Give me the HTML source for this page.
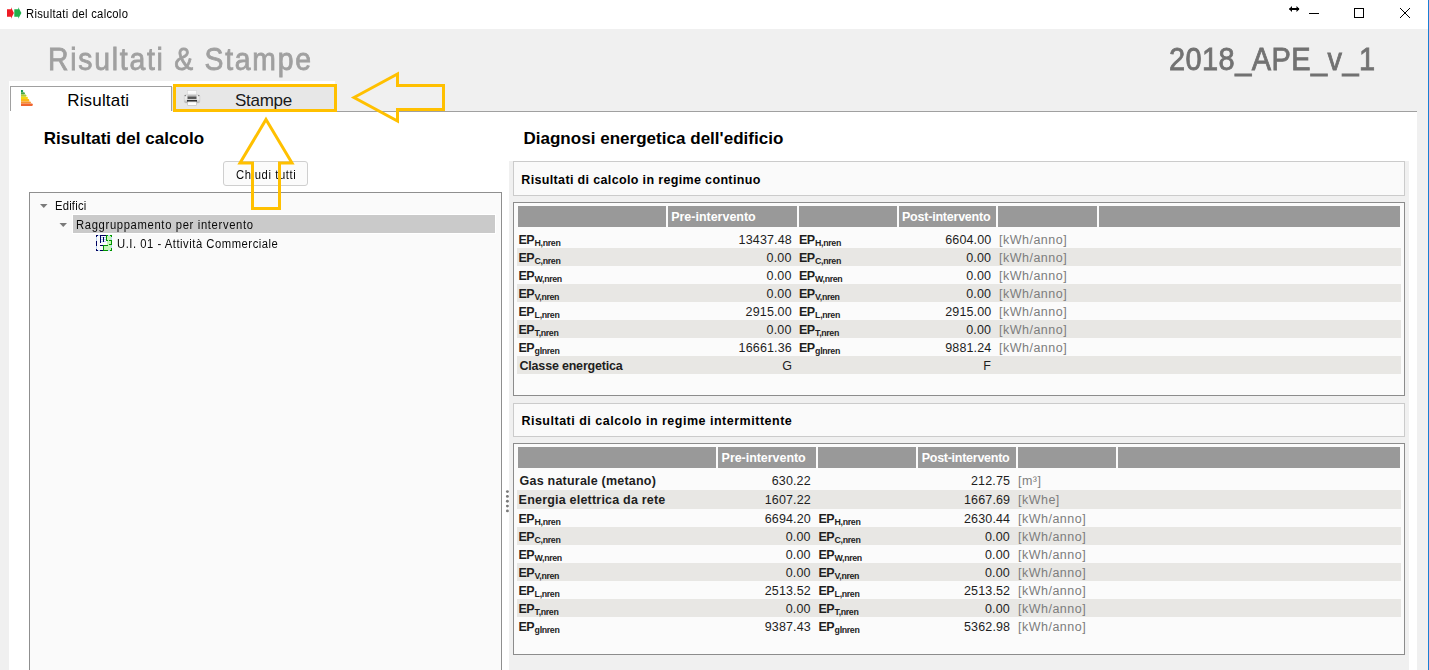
<!DOCTYPE html>
<html><head><meta charset="utf-8">
<style>
html,body{margin:0;padding:0;}
body{width:1429px;height:670px;overflow:hidden;position:relative;background:#f0f0f0;font-family:"Liberation Sans", sans-serif;}
.a{position:absolute;}
</style></head><body>
<!-- title bar -->
<div class="a" style="left:0;top:0;width:1428px;height:29px;background:#fff;"></div>
<div class="a" style="left:1428px;top:0;width:1px;height:670px;background:#1a7fd4;"></div>
<!-- title icon -->
<svg class="a" style="left:3px;top:3px" width="22" height="22" viewBox="0 0 22 22">
  <defs><filter id="bl" x="-30%" y="-30%" width="160%" height="160%"><feGaussianBlur stdDeviation="0.45"/></filter></defs>
  <g filter="url(#bl)">
  <path d="M4 6.3 L8 6.3 L8 4.2 L10.9 10 L8 15.8 L8 13.7 L4 13.7 Z" fill="#ee1c25"/>
  <path d="M11.3 6.3 L15.3 6.3 L15.3 4.2 L18.4 10 L15.3 15.8 L15.3 13.7 L11.3 13.7 Z" fill="#22b14c"/>
  </g>
</svg>
<!-- window controls -->
<svg class="a" style="left:1286px;top:3px" width="130" height="20" viewBox="0 0 130 20">
  <path d="M3.5 6 L13 6" stroke="#000" stroke-width="2"/>
  <path d="M3 6 L6 3 L6 9 Z M13.5 6 L10.5 3 L10.5 9 Z" fill="#000"/>
  <path d="M23 10.5 L33 10.5" stroke="#000" stroke-width="1"/>
  <rect x="68.5" y="5.5" width="9" height="9" fill="none" stroke="#000" stroke-width="1"/>
  <path d="M114 5 L124 15 M124 5 L114 15" stroke="#000" stroke-width="1"/>
</svg>
<!-- tab widget white area -->
<div class="a" style="left:9px;top:81px;width:326px;height:30px;background:#fff;"></div>
<div class="a" style="left:9px;top:111px;width:1408px;height:559px;background:#fff;"></div>
<!-- selected tab -->
<div class="a" style="left:10px;top:86px;width:160px;height:24px;border:1px solid #a0a0a0;border-bottom:none;background:#fff;"></div>
<!-- unselected tab -->
<div class="a" style="left:172px;top:87px;width:163px;height:24px;background:#e7e7e7;"></div>
<!-- tab bar line -->
<div class="a" style="left:173px;top:111px;width:1244px;height:1px;background:#a0a0a0;"></div>
<!-- tab icons -->
<svg class="a" style="left:21px;top:90px" width="13" height="16" viewBox="0 0 13 16">
  <path d="M0 0 H1.6 L2.4 1.1 L1.6 2.3 H0 Z" fill="#0e9a4f"/>
  <path d="M0 2.3 H3.3 L4.1 3.4 L3.3 4.5 H0 Z" fill="#47a844"/>
  <path d="M0 4.5 H4.8 L5.6 5.6 L4.8 6.8 H0 Z" fill="#b5cc32"/>
  <path d="M0 6.8 H6.3 L7.1 7.9 L6.3 9 H0 Z" fill="#f4d60f"/>
  <path d="M0 9 H7.7 L8.5 10.2 L7.7 11.4 H0 Z" fill="#fbb819"/>
  <path d="M0 11.4 H9.3 L10.1 12.4 L9.3 13.5 H0 Z" fill="#f7942e"/>
  <path d="M0 13.5 H11.2 L12 14.7 L11.2 16 H0 Z" fill="#ef6530"/>
</svg>
<svg class="a" style="left:182px;top:88px" width="20" height="20" viewBox="0 0 20 20">
  <defs><linearGradient id="pg" x1="0" y1="0" x2="0" y2="1"><stop offset="0" stop-color="#ffffff"/><stop offset="0.5" stop-color="#f6f6f6"/><stop offset="1" stop-color="#a8a8a8"/></linearGradient>
  <linearGradient id="bd" x1="0" y1="0" x2="0" y2="1"><stop offset="0" stop-color="#7a7a7a"/><stop offset="1" stop-color="#303030"/></linearGradient>
  <linearGradient id="sd" x1="0" y1="0" x2="0" y2="1"><stop offset="0" stop-color="#f4f4f4"/><stop offset="0.6" stop-color="#e8e8e8"/><stop offset="1" stop-color="#a9a9a9"/></linearGradient></defs>
  <path d="M2.3 8.5 Q2.3 6.6 4 6.6 H16 Q17.8 6.6 17.8 8.5 V13.2 Q17.8 15 16 15 H4 Q2.3 15 2.3 13.2 Z" fill="url(#sd)" stroke="#c4c4c4" stroke-width="0.5"/>
  <rect x="2.6" y="7.1" width="1.5" height="1.1" fill="#7e7e7e"/><rect x="15.9" y="7.1" width="1.5" height="1.1" fill="#7e7e7e"/>
  <rect x="5.5" y="2.7" width="9" height="5.6" fill="url(#pg)" stroke="#d2d2d2" stroke-width="0.5"/>
  <rect x="5.5" y="8.3" width="9" height="2.5" fill="url(#bd)"/>
  <rect x="5" y="11.9" width="10" height="1.9" fill="#323232"/>
  <rect x="5.7" y="13.9" width="8.6" height="3.4" fill="#ffffff" stroke="#bdbdbd" stroke-width="0.6"/>
</svg>
<!-- Chiudi tutti button -->
<div class="a" style="left:223px;top:161px;width:83px;height:23px;border:1px solid #cfcfcf;border-radius:3px;background:#fbfbfb;"></div>
<!-- tree -->
<div class="a" style="left:29px;top:192px;width:471px;height:490px;border:1px solid #8f8f8f;background:#fafafa;"></div>
<div class="a" style="left:72px;top:214px;width:422px;height:18px;border:1px solid #fff;background:#cacaca;"></div>
<svg class="a" style="left:38px;top:201px" width="40" height="30" viewBox="0 0 40 30">
  <path d="M2 3 L9.5 3 L5.75 7 Z" fill="#7a7a7a"/>
  <path d="M21.5 22 L29 22 L25.25 26 Z" fill="#7a7a7a"/>
</svg>
<svg class="a" style="left:96px;top:235px" width="16" height="16" viewBox="0 0 16 16" shape-rendering="crispEdges">
  <g fill="#c6f7b6"><rect x="11" y="1" width="4" height="14"/><rect x="8" y="11" width="7" height="4"/></g>
  <g fill="#b8d8f8"><rect x="0" y="2" width="1" height="4"/><rect x="0" y="11" width="1" height="3"/><rect x="2" y="0" width="2" height="1"/><rect x="2" y="15" width="2" height="1"/><rect x="5" y="2" width="5" height="1"/><rect x="5" y="4" width="5" height="1"/><rect x="5" y="6" width="5" height="1"/><rect x="15" y="2" width="1" height="3"/><rect x="15" y="10" width="1" height="3"/><rect x="12" y="0" width="2" height="1"/><rect x="12" y="15" width="2" height="1"/></g>
  <g fill="#00005e">
    <rect x="0" y="0" width="2" height="1"/><rect x="0" y="0" width="1" height="2"/>
    <rect x="0" y="6" width="1" height="5"/>
    <rect x="0" y="14" width="1" height="2"/><rect x="0" y="15" width="2" height="1"/>
    <rect x="4" y="0" width="6" height="1"/><rect x="4" y="0" width="1" height="8"/>
    <rect x="7" y="2" width="1" height="5"/>
    <rect x="4" y="10" width="3" height="1"/>
    <rect x="4" y="15" width="3" height="1"/>
  </g>
  <g fill="#009400">
    <rect x="10" y="0" width="2" height="1"/><rect x="10" y="0" width="1" height="6"/><rect x="10" y="5" width="2" height="1"/>
    <rect x="14" y="0" width="2" height="1"/><rect x="15" y="0" width="1" height="2"/>
    <rect x="13" y="5" width="3" height="1"/><rect x="15" y="5" width="1" height="5"/><rect x="13" y="9" width="3" height="1"/>
    <rect x="7" y="10" width="5" height="1"/><rect x="7" y="10" width="1" height="6"/><rect x="7" y="15" width="5" height="1"/>
    <rect x="14" y="15" width="2" height="1"/><rect x="15" y="13" width="1" height="3"/>
  </g>
</svg>
<!-- right gray panel -->
<div class="a" style="left:509px;top:161px;width:900px;height:520px;background:#f0f0f0;"></div>
<!-- header box 1 -->
<div class="a" style="left:513px;top:161px;width:890px;height:33px;border:1px solid #cbcbcb;background:#fafafa;"></div>
<!-- table box 1 -->
<div class="a" style="left:513px;top:202px;width:890px;height:192px;border:1px solid #8c8c8c;background:#fbfbfb;"></div>
<!-- header row 1 -->
<div class="a" style="left:518px;top:206px;width:148px;height:21px;background:#999;"></div>
<div class="a" style="left:668px;top:206px;width:129px;height:21px;background:#999;"></div>
<div class="a" style="left:799px;top:206px;width:98px;height:21px;background:#999;"></div>
<div class="a" style="left:899px;top:206px;width:97px;height:21px;background:#999;"></div>
<div class="a" style="left:998px;top:206px;width:99px;height:21px;background:#999;"></div>
<div class="a" style="left:1099px;top:206px;width:301px;height:21px;background:#999;"></div>
<!-- alt rows 1 -->
<div class="a" style="left:517px;top:248px;width:884px;height:18px;background:#e8e7e4;"></div>
<div class="a" style="left:517px;top:284px;width:884px;height:18px;background:#e8e7e4;"></div>
<div class="a" style="left:517px;top:320px;width:884px;height:18px;background:#e8e7e4;"></div>
<div class="a" style="left:517px;top:356px;width:884px;height:18px;background:#e8e7e4;"></div>
<!-- header box 2 -->
<div class="a" style="left:513px;top:403px;width:890px;height:32px;border:1px solid #cbcbcb;background:#fafafa;"></div>
<!-- table box 2 -->
<div class="a" style="left:513px;top:443px;width:890px;height:210px;border:1px solid #8c8c8c;background:#fbfbfb;"></div>
<div class="a" style="left:518px;top:447px;width:198px;height:21px;background:#999;"></div>
<div class="a" style="left:718px;top:447px;width:98px;height:21px;background:#999;"></div>
<div class="a" style="left:818px;top:447px;width:98px;height:21px;background:#999;"></div>
<div class="a" style="left:918px;top:447px;width:98px;height:21px;background:#999;"></div>
<div class="a" style="left:1018px;top:447px;width:98px;height:21px;background:#999;"></div>
<div class="a" style="left:1118px;top:447px;width:282px;height:21px;background:#999;"></div>
<div class="a" style="left:517px;top:490px;width:884px;height:19px;background:#e8e7e4;"></div>
<div class="a" style="left:517px;top:527px;width:884px;height:18px;background:#e8e7e4;"></div>
<div class="a" style="left:517px;top:563px;width:884px;height:18px;background:#e8e7e4;"></div>
<div class="a" style="left:517px;top:599px;width:884px;height:18px;background:#e8e7e4;"></div>
<!-- splitter dots -->
<svg class="a" style="left:504px;top:488px" width="7" height="26" viewBox="0 0 7 26">
  <g fill="#7a7a7a"><circle cx="3.4" cy="3.6" r="1.45"/><circle cx="3.4" cy="8.4" r="1.45"/><circle cx="3.4" cy="13.3" r="1.45"/><circle cx="3.4" cy="18.1" r="1.45"/><circle cx="3.4" cy="22.9" r="1.45"/></g>
</svg>
<div style="position:absolute;left:26.40px;top:8.00px;font-size:12.50px;line-height:12.50px;font-weight:normal;color:#000;letter-spacing:0.311px;white-space:nowrap;transform:scaleX(0.9000);transform-origin:0 0;">Risultati del calcolo</div>
<div style="position:absolute;left:48.20px;top:44.30px;font-size:31.50px;line-height:31.50px;font-weight:normal;color:#a0a0a0;letter-spacing:1.948px;white-space:nowrap;transform:scaleX(0.9000);transform-origin:0 0;-webkit-text-stroke:0.8px #a0a0a0;">Risultati &amp; Stampe</div>
<div style="position:absolute;left:1169.20px;top:44.20px;font-size:31.50px;line-height:31.50px;font-weight:normal;color:#727272;letter-spacing:0.460px;white-space:nowrap;transform:scaleX(0.9200);transform-origin:0 0;-webkit-text-stroke:0.8px #727272;">2018_APE_v_1</div>
<div style="position:absolute;left:67.20px;top:92.00px;font-size:17.00px;line-height:17.00px;font-weight:normal;color:#000;letter-spacing:0.175px;white-space:nowrap;">Risultati</div>
<div style="position:absolute;left:235.00px;top:92.00px;font-size:17.00px;line-height:17.00px;font-weight:normal;color:#1a1a1a;letter-spacing:-0.280px;white-space:nowrap;">Stampe</div>
<div style="position:absolute;left:43.70px;top:129.80px;font-size:17.00px;line-height:17.00px;font-weight:bold;color:#000;letter-spacing:0.040px;white-space:nowrap;">Risultati del calcolo</div>
<div style="position:absolute;left:235.50px;top:168.60px;font-size:12.50px;line-height:12.50px;font-weight:normal;color:#0a0a0a;letter-spacing:0.667px;white-space:nowrap;transform:scaleX(0.9000);transform-origin:0 0;">Chiudi tutti</div>
<div style="position:absolute;left:55.20px;top:199.90px;font-size:12.50px;line-height:12.50px;font-weight:normal;color:#0a0a0a;letter-spacing:0.222px;white-space:nowrap;transform:scaleX(0.9000);transform-origin:0 0;">Edifici</div>
<div style="position:absolute;left:75.50px;top:218.70px;font-size:12.50px;line-height:12.50px;font-weight:normal;color:#0a0a0a;letter-spacing:0.722px;white-space:nowrap;transform:scaleX(0.9000);transform-origin:0 0;">Raggruppamento per intervento</div>
<div style="position:absolute;left:117.30px;top:237.90px;font-size:12.50px;line-height:12.50px;font-weight:normal;color:#0a0a0a;letter-spacing:0.582px;white-space:nowrap;transform:scaleX(0.9000);transform-origin:0 0;">U.I. 01 - Attivit&agrave; Commerciale</div>
<div style="position:absolute;left:523.40px;top:129.50px;font-size:17.00px;line-height:17.00px;font-weight:bold;color:#000;letter-spacing:0.028px;white-space:nowrap;">Diagnosi energetica dell'edificio</div>
<div style="position:absolute;left:521.30px;top:173.70px;font-size:12.50px;line-height:12.50px;font-weight:bold;color:#000;letter-spacing:0.350px;white-space:nowrap;">Risultati di calcolo in regime continuo</div>
<div style="position:absolute;left:521.40px;top:415.00px;font-size:12.50px;line-height:12.50px;font-weight:bold;color:#000;letter-spacing:0.505px;white-space:nowrap;">Risultati di calcolo in regime intermittente</div>
<div style="position:absolute;left:671.20px;top:210.80px;font-size:12.50px;line-height:12.50px;font-weight:bold;color:#fff;letter-spacing:-0.015px;white-space:nowrap;">Pre-intervento</div>
<div style="position:absolute;left:902.00px;top:210.80px;font-size:12.50px;line-height:12.50px;font-weight:bold;color:#fff;letter-spacing:-0.221px;white-space:nowrap;">Post-intervento</div>
<div style="position:absolute;left:518.50px;top:233.80px;font-size:12.50px;line-height:12.50px;font-weight:bold;color:#1e1e1e;letter-spacing:-0.600px;white-space:nowrap;">EP</div>
<div style="position:absolute;left:534.60px;top:238.50px;font-size:8.80px;line-height:8.80px;font-weight:bold;color:#1e1e1e;letter-spacing:-0.340px;white-space:nowrap;">H,nren</div>
<div style="position:absolute;left:738.60px;top:233.80px;font-size:12.50px;line-height:12.50px;font-weight:normal;color:#1e1e1e;letter-spacing:0.143px;white-space:nowrap;">13437.48</div>
<div style="position:absolute;left:799.00px;top:233.80px;font-size:12.50px;line-height:12.50px;font-weight:bold;color:#1e1e1e;letter-spacing:-0.600px;white-space:nowrap;">EP</div>
<div style="position:absolute;left:815.10px;top:238.50px;font-size:8.80px;line-height:8.80px;font-weight:bold;color:#1e1e1e;letter-spacing:-0.340px;white-space:nowrap;">H,nren</div>
<div style="position:absolute;left:945.20px;top:233.80px;font-size:12.50px;line-height:12.50px;font-weight:normal;color:#1e1e1e;letter-spacing:0.143px;white-space:nowrap;">6604.00</div>
<div style="position:absolute;left:999.00px;top:233.80px;font-size:12.50px;line-height:12.50px;font-weight:normal;color:#7d7d7d;letter-spacing:0.489px;white-space:nowrap;">[kWh/anno]</div>
<div style="position:absolute;left:518.50px;top:251.80px;font-size:12.50px;line-height:12.50px;font-weight:bold;color:#1e1e1e;letter-spacing:-0.600px;white-space:nowrap;">EP</div>
<div style="position:absolute;left:534.60px;top:256.50px;font-size:8.80px;line-height:8.80px;font-weight:bold;color:#1e1e1e;letter-spacing:-0.340px;white-space:nowrap;">C,nren</div>
<div style="position:absolute;left:766.60px;top:251.80px;font-size:12.50px;line-height:12.50px;font-weight:normal;color:#1e1e1e;letter-spacing:0.143px;white-space:nowrap;">0.00</div>
<div style="position:absolute;left:799.00px;top:251.80px;font-size:12.50px;line-height:12.50px;font-weight:bold;color:#1e1e1e;letter-spacing:-0.600px;white-space:nowrap;">EP</div>
<div style="position:absolute;left:815.10px;top:256.50px;font-size:8.80px;line-height:8.80px;font-weight:bold;color:#1e1e1e;letter-spacing:-0.340px;white-space:nowrap;">C,nren</div>
<div style="position:absolute;left:966.20px;top:251.80px;font-size:12.50px;line-height:12.50px;font-weight:normal;color:#1e1e1e;letter-spacing:0.143px;white-space:nowrap;">0.00</div>
<div style="position:absolute;left:999.00px;top:251.80px;font-size:12.50px;line-height:12.50px;font-weight:normal;color:#7d7d7d;letter-spacing:0.489px;white-space:nowrap;">[kWh/anno]</div>
<div style="position:absolute;left:518.50px;top:269.80px;font-size:12.50px;line-height:12.50px;font-weight:bold;color:#1e1e1e;letter-spacing:-0.600px;white-space:nowrap;">EP</div>
<div style="position:absolute;left:534.60px;top:274.50px;font-size:8.80px;line-height:8.80px;font-weight:bold;color:#1e1e1e;letter-spacing:-0.340px;white-space:nowrap;">W,nren</div>
<div style="position:absolute;left:766.60px;top:269.80px;font-size:12.50px;line-height:12.50px;font-weight:normal;color:#1e1e1e;letter-spacing:0.143px;white-space:nowrap;">0.00</div>
<div style="position:absolute;left:799.00px;top:269.80px;font-size:12.50px;line-height:12.50px;font-weight:bold;color:#1e1e1e;letter-spacing:-0.600px;white-space:nowrap;">EP</div>
<div style="position:absolute;left:815.10px;top:274.50px;font-size:8.80px;line-height:8.80px;font-weight:bold;color:#1e1e1e;letter-spacing:-0.340px;white-space:nowrap;">W,nren</div>
<div style="position:absolute;left:966.20px;top:269.80px;font-size:12.50px;line-height:12.50px;font-weight:normal;color:#1e1e1e;letter-spacing:0.143px;white-space:nowrap;">0.00</div>
<div style="position:absolute;left:999.00px;top:269.80px;font-size:12.50px;line-height:12.50px;font-weight:normal;color:#7d7d7d;letter-spacing:0.489px;white-space:nowrap;">[kWh/anno]</div>
<div style="position:absolute;left:518.50px;top:287.80px;font-size:12.50px;line-height:12.50px;font-weight:bold;color:#1e1e1e;letter-spacing:-0.600px;white-space:nowrap;">EP</div>
<div style="position:absolute;left:534.60px;top:292.50px;font-size:8.80px;line-height:8.80px;font-weight:bold;color:#1e1e1e;letter-spacing:-0.340px;white-space:nowrap;">V,nren</div>
<div style="position:absolute;left:766.60px;top:287.80px;font-size:12.50px;line-height:12.50px;font-weight:normal;color:#1e1e1e;letter-spacing:0.143px;white-space:nowrap;">0.00</div>
<div style="position:absolute;left:799.00px;top:287.80px;font-size:12.50px;line-height:12.50px;font-weight:bold;color:#1e1e1e;letter-spacing:-0.600px;white-space:nowrap;">EP</div>
<div style="position:absolute;left:815.10px;top:292.50px;font-size:8.80px;line-height:8.80px;font-weight:bold;color:#1e1e1e;letter-spacing:-0.340px;white-space:nowrap;">V,nren</div>
<div style="position:absolute;left:966.20px;top:287.80px;font-size:12.50px;line-height:12.50px;font-weight:normal;color:#1e1e1e;letter-spacing:0.143px;white-space:nowrap;">0.00</div>
<div style="position:absolute;left:999.00px;top:287.80px;font-size:12.50px;line-height:12.50px;font-weight:normal;color:#7d7d7d;letter-spacing:0.489px;white-space:nowrap;">[kWh/anno]</div>
<div style="position:absolute;left:518.50px;top:305.80px;font-size:12.50px;line-height:12.50px;font-weight:bold;color:#1e1e1e;letter-spacing:-0.600px;white-space:nowrap;">EP</div>
<div style="position:absolute;left:534.60px;top:310.50px;font-size:8.80px;line-height:8.80px;font-weight:bold;color:#1e1e1e;letter-spacing:-0.340px;white-space:nowrap;">L,nren</div>
<div style="position:absolute;left:745.60px;top:305.80px;font-size:12.50px;line-height:12.50px;font-weight:normal;color:#1e1e1e;letter-spacing:0.143px;white-space:nowrap;">2915.00</div>
<div style="position:absolute;left:799.00px;top:305.80px;font-size:12.50px;line-height:12.50px;font-weight:bold;color:#1e1e1e;letter-spacing:-0.600px;white-space:nowrap;">EP</div>
<div style="position:absolute;left:815.10px;top:310.50px;font-size:8.80px;line-height:8.80px;font-weight:bold;color:#1e1e1e;letter-spacing:-0.340px;white-space:nowrap;">L,nren</div>
<div style="position:absolute;left:945.20px;top:305.80px;font-size:12.50px;line-height:12.50px;font-weight:normal;color:#1e1e1e;letter-spacing:0.143px;white-space:nowrap;">2915.00</div>
<div style="position:absolute;left:999.00px;top:305.80px;font-size:12.50px;line-height:12.50px;font-weight:normal;color:#7d7d7d;letter-spacing:0.489px;white-space:nowrap;">[kWh/anno]</div>
<div style="position:absolute;left:518.50px;top:323.80px;font-size:12.50px;line-height:12.50px;font-weight:bold;color:#1e1e1e;letter-spacing:-0.600px;white-space:nowrap;">EP</div>
<div style="position:absolute;left:534.60px;top:328.50px;font-size:8.80px;line-height:8.80px;font-weight:bold;color:#1e1e1e;letter-spacing:-0.340px;white-space:nowrap;">T,nren</div>
<div style="position:absolute;left:766.60px;top:323.80px;font-size:12.50px;line-height:12.50px;font-weight:normal;color:#1e1e1e;letter-spacing:0.143px;white-space:nowrap;">0.00</div>
<div style="position:absolute;left:799.00px;top:323.80px;font-size:12.50px;line-height:12.50px;font-weight:bold;color:#1e1e1e;letter-spacing:-0.600px;white-space:nowrap;">EP</div>
<div style="position:absolute;left:815.10px;top:328.50px;font-size:8.80px;line-height:8.80px;font-weight:bold;color:#1e1e1e;letter-spacing:-0.340px;white-space:nowrap;">T,nren</div>
<div style="position:absolute;left:966.20px;top:323.80px;font-size:12.50px;line-height:12.50px;font-weight:normal;color:#1e1e1e;letter-spacing:0.143px;white-space:nowrap;">0.00</div>
<div style="position:absolute;left:999.00px;top:323.80px;font-size:12.50px;line-height:12.50px;font-weight:normal;color:#7d7d7d;letter-spacing:0.489px;white-space:nowrap;">[kWh/anno]</div>
<div style="position:absolute;left:518.50px;top:341.80px;font-size:12.50px;line-height:12.50px;font-weight:bold;color:#1e1e1e;letter-spacing:-0.600px;white-space:nowrap;">EP</div>
<div style="position:absolute;left:534.60px;top:346.50px;font-size:8.80px;line-height:8.80px;font-weight:bold;color:#1e1e1e;letter-spacing:-0.340px;white-space:nowrap;">glnren</div>
<div style="position:absolute;left:738.60px;top:341.80px;font-size:12.50px;line-height:12.50px;font-weight:normal;color:#1e1e1e;letter-spacing:0.143px;white-space:nowrap;">16661.36</div>
<div style="position:absolute;left:799.00px;top:341.80px;font-size:12.50px;line-height:12.50px;font-weight:bold;color:#1e1e1e;letter-spacing:-0.600px;white-space:nowrap;">EP</div>
<div style="position:absolute;left:815.10px;top:346.50px;font-size:8.80px;line-height:8.80px;font-weight:bold;color:#1e1e1e;letter-spacing:-0.340px;white-space:nowrap;">glnren</div>
<div style="position:absolute;left:945.20px;top:341.80px;font-size:12.50px;line-height:12.50px;font-weight:normal;color:#1e1e1e;letter-spacing:0.143px;white-space:nowrap;">9881.24</div>
<div style="position:absolute;left:999.00px;top:341.80px;font-size:12.50px;line-height:12.50px;font-weight:normal;color:#7d7d7d;letter-spacing:0.489px;white-space:nowrap;">[kWh/anno]</div>
<div style="position:absolute;left:519.50px;top:359.80px;font-size:12.50px;line-height:12.50px;font-weight:bold;color:#1e1e1e;letter-spacing:-0.194px;white-space:nowrap;">Classe energetica</div>
<div style="position:absolute;left:782.20px;top:359.80px;font-size:12.50px;line-height:12.50px;font-weight:normal;color:#1e1e1e;letter-spacing:0.000px;white-space:nowrap;">G</div>
<div style="position:absolute;left:983.20px;top:359.80px;font-size:12.50px;line-height:12.50px;font-weight:normal;color:#1e1e1e;letter-spacing:0.000px;white-space:nowrap;">F</div>
<div style="position:absolute;left:721.60px;top:451.50px;font-size:12.50px;line-height:12.50px;font-weight:bold;color:#fff;letter-spacing:-0.046px;white-space:nowrap;">Pre-intervento</div>
<div style="position:absolute;left:921.70px;top:451.50px;font-size:12.50px;line-height:12.50px;font-weight:bold;color:#fff;letter-spacing:-0.264px;white-space:nowrap;">Post-intervento</div>
<div style="position:absolute;left:519.60px;top:475.00px;font-size:12.50px;line-height:12.50px;font-weight:bold;color:#1e1e1e;letter-spacing:0.215px;white-space:nowrap;">Gas naturale (metano)</div>
<div style="position:absolute;left:771.70px;top:475.00px;font-size:12.50px;line-height:12.50px;font-weight:normal;color:#1e1e1e;letter-spacing:0.143px;white-space:nowrap;">630.22</div>
<div style="position:absolute;left:971.00px;top:475.00px;font-size:12.50px;line-height:12.50px;font-weight:normal;color:#1e1e1e;letter-spacing:0.143px;white-space:nowrap;">212.75</div>
<div style="position:absolute;left:1018.00px;top:475.00px;font-size:12.50px;line-height:12.50px;font-weight:normal;color:#7d7d7d;letter-spacing:0.489px;white-space:nowrap;">[m&sup3;]</div>
<div style="position:absolute;left:518.60px;top:494.00px;font-size:12.50px;line-height:12.50px;font-weight:bold;color:#1e1e1e;letter-spacing:0.208px;white-space:nowrap;">Energia elettrica da rete</div>
<div style="position:absolute;left:764.70px;top:494.00px;font-size:12.50px;line-height:12.50px;font-weight:normal;color:#1e1e1e;letter-spacing:0.143px;white-space:nowrap;">1607.22</div>
<div style="position:absolute;left:964.00px;top:494.00px;font-size:12.50px;line-height:12.50px;font-weight:normal;color:#1e1e1e;letter-spacing:0.143px;white-space:nowrap;">1667.69</div>
<div style="position:absolute;left:1018.00px;top:494.00px;font-size:12.50px;line-height:12.50px;font-weight:normal;color:#7d7d7d;letter-spacing:0.489px;white-space:nowrap;">[kWhe]</div>
<div style="position:absolute;left:518.50px;top:513.00px;font-size:12.50px;line-height:12.50px;font-weight:bold;color:#1e1e1e;letter-spacing:-0.600px;white-space:nowrap;">EP</div>
<div style="position:absolute;left:534.60px;top:517.70px;font-size:8.80px;line-height:8.80px;font-weight:bold;color:#1e1e1e;letter-spacing:-0.340px;white-space:nowrap;">H,nren</div>
<div style="position:absolute;left:764.70px;top:513.00px;font-size:12.50px;line-height:12.50px;font-weight:normal;color:#1e1e1e;letter-spacing:0.143px;white-space:nowrap;">6694.20</div>
<div style="position:absolute;left:818.50px;top:513.00px;font-size:12.50px;line-height:12.50px;font-weight:bold;color:#1e1e1e;letter-spacing:-0.600px;white-space:nowrap;">EP</div>
<div style="position:absolute;left:834.60px;top:517.70px;font-size:8.80px;line-height:8.80px;font-weight:bold;color:#1e1e1e;letter-spacing:-0.340px;white-space:nowrap;">H,nren</div>
<div style="position:absolute;left:964.00px;top:513.00px;font-size:12.50px;line-height:12.50px;font-weight:normal;color:#1e1e1e;letter-spacing:0.143px;white-space:nowrap;">2630.44</div>
<div style="position:absolute;left:1018.00px;top:513.00px;font-size:12.50px;line-height:12.50px;font-weight:normal;color:#7d7d7d;letter-spacing:0.489px;white-space:nowrap;">[kWh/anno]</div>
<div style="position:absolute;left:518.50px;top:531.00px;font-size:12.50px;line-height:12.50px;font-weight:bold;color:#1e1e1e;letter-spacing:-0.600px;white-space:nowrap;">EP</div>
<div style="position:absolute;left:534.60px;top:535.70px;font-size:8.80px;line-height:8.80px;font-weight:bold;color:#1e1e1e;letter-spacing:-0.340px;white-space:nowrap;">C,nren</div>
<div style="position:absolute;left:785.70px;top:531.00px;font-size:12.50px;line-height:12.50px;font-weight:normal;color:#1e1e1e;letter-spacing:0.143px;white-space:nowrap;">0.00</div>
<div style="position:absolute;left:818.50px;top:531.00px;font-size:12.50px;line-height:12.50px;font-weight:bold;color:#1e1e1e;letter-spacing:-0.600px;white-space:nowrap;">EP</div>
<div style="position:absolute;left:834.60px;top:535.70px;font-size:8.80px;line-height:8.80px;font-weight:bold;color:#1e1e1e;letter-spacing:-0.340px;white-space:nowrap;">C,nren</div>
<div style="position:absolute;left:985.00px;top:531.00px;font-size:12.50px;line-height:12.50px;font-weight:normal;color:#1e1e1e;letter-spacing:0.143px;white-space:nowrap;">0.00</div>
<div style="position:absolute;left:1018.00px;top:531.00px;font-size:12.50px;line-height:12.50px;font-weight:normal;color:#7d7d7d;letter-spacing:0.489px;white-space:nowrap;">[kWh/anno]</div>
<div style="position:absolute;left:518.50px;top:549.00px;font-size:12.50px;line-height:12.50px;font-weight:bold;color:#1e1e1e;letter-spacing:-0.600px;white-space:nowrap;">EP</div>
<div style="position:absolute;left:534.60px;top:553.70px;font-size:8.80px;line-height:8.80px;font-weight:bold;color:#1e1e1e;letter-spacing:-0.340px;white-space:nowrap;">W,nren</div>
<div style="position:absolute;left:785.70px;top:549.00px;font-size:12.50px;line-height:12.50px;font-weight:normal;color:#1e1e1e;letter-spacing:0.143px;white-space:nowrap;">0.00</div>
<div style="position:absolute;left:818.50px;top:549.00px;font-size:12.50px;line-height:12.50px;font-weight:bold;color:#1e1e1e;letter-spacing:-0.600px;white-space:nowrap;">EP</div>
<div style="position:absolute;left:834.60px;top:553.70px;font-size:8.80px;line-height:8.80px;font-weight:bold;color:#1e1e1e;letter-spacing:-0.340px;white-space:nowrap;">W,nren</div>
<div style="position:absolute;left:985.00px;top:549.00px;font-size:12.50px;line-height:12.50px;font-weight:normal;color:#1e1e1e;letter-spacing:0.143px;white-space:nowrap;">0.00</div>
<div style="position:absolute;left:1018.00px;top:549.00px;font-size:12.50px;line-height:12.50px;font-weight:normal;color:#7d7d7d;letter-spacing:0.489px;white-space:nowrap;">[kWh/anno]</div>
<div style="position:absolute;left:518.50px;top:567.00px;font-size:12.50px;line-height:12.50px;font-weight:bold;color:#1e1e1e;letter-spacing:-0.600px;white-space:nowrap;">EP</div>
<div style="position:absolute;left:534.60px;top:571.70px;font-size:8.80px;line-height:8.80px;font-weight:bold;color:#1e1e1e;letter-spacing:-0.340px;white-space:nowrap;">V,nren</div>
<div style="position:absolute;left:785.70px;top:567.00px;font-size:12.50px;line-height:12.50px;font-weight:normal;color:#1e1e1e;letter-spacing:0.143px;white-space:nowrap;">0.00</div>
<div style="position:absolute;left:818.50px;top:567.00px;font-size:12.50px;line-height:12.50px;font-weight:bold;color:#1e1e1e;letter-spacing:-0.600px;white-space:nowrap;">EP</div>
<div style="position:absolute;left:834.60px;top:571.70px;font-size:8.80px;line-height:8.80px;font-weight:bold;color:#1e1e1e;letter-spacing:-0.340px;white-space:nowrap;">V,nren</div>
<div style="position:absolute;left:985.00px;top:567.00px;font-size:12.50px;line-height:12.50px;font-weight:normal;color:#1e1e1e;letter-spacing:0.143px;white-space:nowrap;">0.00</div>
<div style="position:absolute;left:1018.00px;top:567.00px;font-size:12.50px;line-height:12.50px;font-weight:normal;color:#7d7d7d;letter-spacing:0.489px;white-space:nowrap;">[kWh/anno]</div>
<div style="position:absolute;left:518.50px;top:585.00px;font-size:12.50px;line-height:12.50px;font-weight:bold;color:#1e1e1e;letter-spacing:-0.600px;white-space:nowrap;">EP</div>
<div style="position:absolute;left:534.60px;top:589.70px;font-size:8.80px;line-height:8.80px;font-weight:bold;color:#1e1e1e;letter-spacing:-0.340px;white-space:nowrap;">L,nren</div>
<div style="position:absolute;left:764.70px;top:585.00px;font-size:12.50px;line-height:12.50px;font-weight:normal;color:#1e1e1e;letter-spacing:0.143px;white-space:nowrap;">2513.52</div>
<div style="position:absolute;left:818.50px;top:585.00px;font-size:12.50px;line-height:12.50px;font-weight:bold;color:#1e1e1e;letter-spacing:-0.600px;white-space:nowrap;">EP</div>
<div style="position:absolute;left:834.60px;top:589.70px;font-size:8.80px;line-height:8.80px;font-weight:bold;color:#1e1e1e;letter-spacing:-0.340px;white-space:nowrap;">L,nren</div>
<div style="position:absolute;left:964.00px;top:585.00px;font-size:12.50px;line-height:12.50px;font-weight:normal;color:#1e1e1e;letter-spacing:0.143px;white-space:nowrap;">2513.52</div>
<div style="position:absolute;left:1018.00px;top:585.00px;font-size:12.50px;line-height:12.50px;font-weight:normal;color:#7d7d7d;letter-spacing:0.489px;white-space:nowrap;">[kWh/anno]</div>
<div style="position:absolute;left:518.50px;top:603.00px;font-size:12.50px;line-height:12.50px;font-weight:bold;color:#1e1e1e;letter-spacing:-0.600px;white-space:nowrap;">EP</div>
<div style="position:absolute;left:534.60px;top:607.70px;font-size:8.80px;line-height:8.80px;font-weight:bold;color:#1e1e1e;letter-spacing:-0.340px;white-space:nowrap;">T,nren</div>
<div style="position:absolute;left:785.70px;top:603.00px;font-size:12.50px;line-height:12.50px;font-weight:normal;color:#1e1e1e;letter-spacing:0.143px;white-space:nowrap;">0.00</div>
<div style="position:absolute;left:818.50px;top:603.00px;font-size:12.50px;line-height:12.50px;font-weight:bold;color:#1e1e1e;letter-spacing:-0.600px;white-space:nowrap;">EP</div>
<div style="position:absolute;left:834.60px;top:607.70px;font-size:8.80px;line-height:8.80px;font-weight:bold;color:#1e1e1e;letter-spacing:-0.340px;white-space:nowrap;">T,nren</div>
<div style="position:absolute;left:985.00px;top:603.00px;font-size:12.50px;line-height:12.50px;font-weight:normal;color:#1e1e1e;letter-spacing:0.143px;white-space:nowrap;">0.00</div>
<div style="position:absolute;left:1018.00px;top:603.00px;font-size:12.50px;line-height:12.50px;font-weight:normal;color:#7d7d7d;letter-spacing:0.489px;white-space:nowrap;">[kWh/anno]</div>
<div style="position:absolute;left:518.50px;top:621.00px;font-size:12.50px;line-height:12.50px;font-weight:bold;color:#1e1e1e;letter-spacing:-0.600px;white-space:nowrap;">EP</div>
<div style="position:absolute;left:534.60px;top:625.70px;font-size:8.80px;line-height:8.80px;font-weight:bold;color:#1e1e1e;letter-spacing:-0.340px;white-space:nowrap;">glnren</div>
<div style="position:absolute;left:764.70px;top:621.00px;font-size:12.50px;line-height:12.50px;font-weight:normal;color:#1e1e1e;letter-spacing:0.143px;white-space:nowrap;">9387.43</div>
<div style="position:absolute;left:818.50px;top:621.00px;font-size:12.50px;line-height:12.50px;font-weight:bold;color:#1e1e1e;letter-spacing:-0.600px;white-space:nowrap;">EP</div>
<div style="position:absolute;left:834.60px;top:625.70px;font-size:8.80px;line-height:8.80px;font-weight:bold;color:#1e1e1e;letter-spacing:-0.340px;white-space:nowrap;">glnren</div>
<div style="position:absolute;left:964.00px;top:621.00px;font-size:12.50px;line-height:12.50px;font-weight:normal;color:#1e1e1e;letter-spacing:0.143px;white-space:nowrap;">5362.98</div>
<div style="position:absolute;left:1018.00px;top:621.00px;font-size:12.50px;line-height:12.50px;font-weight:normal;color:#7d7d7d;letter-spacing:0.489px;white-space:nowrap;">[kWh/anno]</div>
<!-- annotation arrows -->
<svg class="a" style="left:0;top:0" width="1429" height="670" viewBox="0 0 1429 670">
  <g fill="none" stroke="#ffc000" stroke-width="3" stroke-linejoin="miter">
    <rect x="174.5" y="85.5" width="161" height="25"/>
    <path d="M354 97.5 L397.5 74 L397.5 85.5 L443.5 85.5 L443.5 109.5 L397.5 109.5 L397.5 121 Z"/>
    <path d="M266 119.5 L292 163 L279.5 163 L279.5 208.5 L252.5 208.5 L252.5 163 L240 163 Z"/>
  </g>
</svg>
</body></html>
